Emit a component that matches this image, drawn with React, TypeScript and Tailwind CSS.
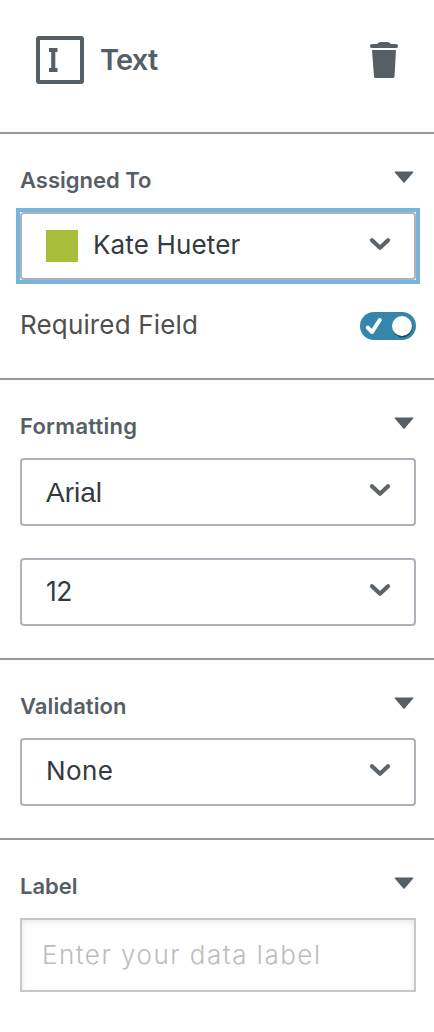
import type { ReactNode } from "react"

const Caret = () => (
  <svg className="mt-1 h-[14px] w-6" viewBox="0 0 24 14" fill="#565e66">
    <path d="M3.200 1.600h17.600a.5.5 0 0 1 .4.8l-8.400 9.900a1 1 0 0 1-1.600 0L2.800 2.400a.5.5 0 0 1 .4-.8Z" />
  </svg>
)

const Chevron = () => (
  <svg className="mb-1 h-[14px] w-[22px]" viewBox="0 0 22 14" fill="none" stroke="#5c646b" strokeWidth="4.200" strokeLinecap="round" strokeLinejoin="round">
    <path d="m3 3.300 8 7.500 8-7.500" />
  </svg>
)

const Section = ({ title, spacing, children }: { title: string; spacing?: string; children: ReactNode }) => {
  return (
    <section className="pt-8 pr-[18px] pl-5">
      <div className="mb-[18px] flex h-7 justify-between">
        <h2 className={`text-[22px] leading-7 font-semibold text-[#565e66] ${spacing ?? ""}`}>{title}</h2>
        <Caret />
      </div>
      <div className="flex flex-col gap-8">{children}</div>
    </section>
  )
}

const Select = ({ children, focused }: { children: ReactNode; focused?: boolean }) => {
  const ring = focused ? "outline-4 outline-[#77b5d9]" : ""
  return (
    <div className={`w-[396px] ${ring}`}>
      <div className="flex h-[68px] items-center justify-between rounded-[4px] border-2 border-[#adb2bd] pr-[23px] pl-6 text-[#343a40]">
        {children}
        <Chevron />
      </div>
    </div>
  )
}

const App = () => {
  return (
    <main className="h-[1032px] w-[434px] overflow-hidden bg-white font-['Inter',sans-serif]">
      {/* Header */}
      <header className="flex h-[134px] justify-between border-b-2 border-[#979797] pt-9 pr-9 pl-9">
        <div className="flex h-12 items-center">
          <svg className="h-12 w-12" viewBox="0 0 48 48" fill="#565e66">
            <rect x="2" y="2" width="44" height="44" rx="1" fill="none" stroke="#565e66" strokeWidth="4" />
            <path d="M13 12h8.500v4h-2.200v16h2.200v4H13v-4h2.200V16H13z" />
          </svg>
          <h1 className="ml-4 text-[29px] leading-10 font-semibold tracking-[-0.8px] text-[#565e66]">Text</h1>
        </div>
        <svg className="mt-[6px] h-9 w-7" viewBox="0 0 28 36" fill="#565e66">
          <path d="M2 2H7q1.500-2 4-2h6q2.500 0 4 2h5Q28 2 28 4t-1.500 2H1.500Q0 6 0 4t2-2Z" />
          <path d="M2 8h24l-1.500 26.500Q24.400 36 23 36H5.500Q4.200 36 4 34.500Z" />
        </svg>
      </header>

      {/* Assigned To */}
      <Section title="Assigned To">
        <Select focused>
          <div className="flex items-center">
            <div className="h-8 w-8 bg-[#a8bd3a]"></div>
            <span className="mb-[2px] ml-[15px] text-[26px] leading-8 tracking-[0.15px]">Kate Hueter</span>
          </div>
        </Select>
        <div className="flex h-7 w-[396px] items-center justify-between">
          <span className="mb-[2px] text-[26px] leading-8 tracking-[0.15px] text-[#4f4f4f]">Required Field</span>
          <svg className="h-7 w-14" viewBox="0 0 56 28">
            <rect width="56" height="28" rx="14" fill="#3685aa" />
            <path d="m7.800 15.700 4.200 4.300 7.800-12" fill="none" stroke="white" strokeWidth="4" strokeLinecap="round" strokeLinejoin="round" />
            <circle cx="42.500" cy="15.500" r="10" fill="#1f4a60" />
            <circle cx="42" cy="14" r="10" fill="white" />
          </svg>
        </div>
      </Section>
      <div className="mt-[38px] h-[2px] bg-[#979797]"></div>

      {/* Formatting */}
      <Section title="Formatting" spacing="tracking-[0.25px]">
        <Select>
          <span className="pt-px font-['Liberation_Sans',sans-serif] text-[28px] leading-8">Arial</span>
        </Select>
        <Select>
          <span className="mb-[2px] text-[26.5px] leading-8 tracking-[-0.5px]">12</span>
        </Select>
      </Section>
      <div className="mt-8 h-[2px] bg-[#979797]"></div>

      {/* Validation */}
      <Section title="Validation" spacing="tracking-[0.1px]">
        <Select>
          <span className="mb-[2px] text-[26px] leading-8 tracking-[0.4px]">None</span>
        </Select>
      </Section>
      <div className="mt-8 h-[2px] bg-[#979797]"></div>

      {/* Label */}
      <Section title="Label">
        <input
          className="h-[74px] w-[396px] border-2 border-[#c8c8c8] px-5 pb-[2px] text-[26px] font-light tracking-[1.5px] shadow-[inset_0_2px_6px_rgba(0,0,0,0.1)] placeholder:text-[#bcbcbc]"
          placeholder="Enter your data label"
        />
      </Section>
    </main>
  )
}

export default App
